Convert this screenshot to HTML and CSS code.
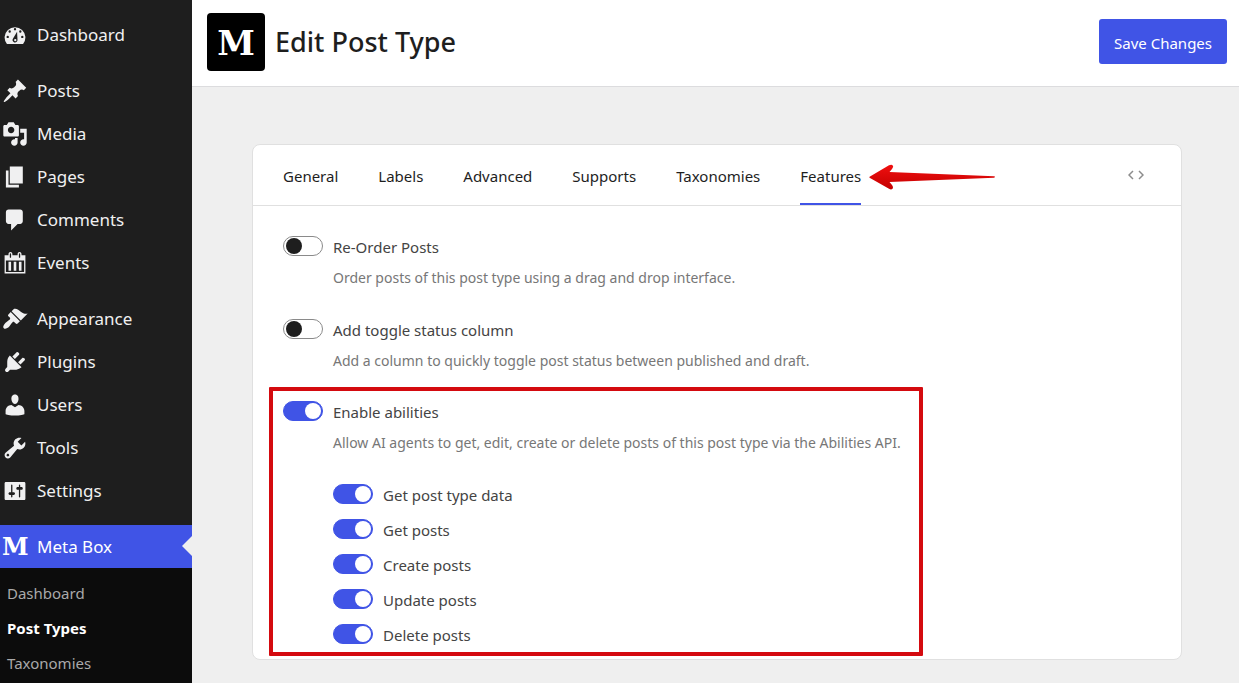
FILE: index.html
```html
<!DOCTYPE html>
<html lang="en">
<head>
    <meta charset="UTF-8">
    <meta name="viewport" content="width=device-width, initial-scale=1.0">
    <title>Edit Post Type</title>
    <link rel="stylesheet" href="styles.css">
</head>
<body>
    <!-- Admin menu -->
    <nav class="sidebar">
        <ul class="menu">
            <li><a href="#">
                <svg class="icon" viewBox="0 0 20 20"><path fill-rule="evenodd" d="M3.8 17h12.4A8 8 0 1 0 3.8 17zM10 4.600a.9.9 0 1 1 0 1.800.9.9 0 1 1 0-1.800zM5.900 6.400a.9.9 0 1 1 0 1.800.9.9 0 1 1 0-1.800zM14.100 6.400a.9.9 0 1 1 0 1.800.9.9 0 1 1 0-1.800zM4.400 10.600a.9.9 0 1 1 0 1.800.9.9 0 1 1 0-1.800zM15.600 10.600a.9.9 0 1 1 0 1.800.9.9 0 1 1 0-1.800zM11.600 7.500L11.900 13.600a1.900 1.900 0 1 1-3.400-.9zM10.200 13a.9.9 0 1 0 0 1.800.9.9 0 1 0 0-1.800z"/></svg>
                Dashboard</a></li>
            <li class="separated"><a href="#">
                <svg class="icon" viewBox="0 0 20 20"><path d="M10.440 3.020l1.820-1.820 6.360 6.350-1.830 1.820c-1.050-.68-2.480-.57-3.410.36l-.75.75c-.92.93-1.040 2.350-.35 3.410l-1.830 1.820-2.410-2.410-2.800 2.790c-.42.42-3.380 2.710-3.800 2.290s1.860-3.390 2.280-3.810l2.790-2.790L4.100 9.360l1.830-1.820c1.050.69 2.480.57 3.400-.36l.75-.75c.93-.92 1.050-2.350.36-3.410z"/></svg>
                Posts</a></li>
            <li><a href="#">
                <svg class="icon" viewBox="0 0 20 20"><path d="M13 11V4c0-.55-.45-1-1-1h-1.670L9 1H5L3.670 3H2c-.55 0-1 .45-1 1v7c0 .55.45 1 1 1h10c.55 0 1-.45 1-1zM7 4.500c1.380 0 2.500 1.120 2.500 2.500S8.380 9.500 7 9.500 4.500 8.380 4.500 7 5.620 4.500 7 4.500zM14 6h5v10.500c0 1.380-1.120 2.500-2.500 2.500S14 17.880 14 16.500s1.120-2.500 2.500-2.500c.17 0 .34.020.5.050V9h-3V6zm-4 8.050V13h2v3.500c0 1.380-1.120 2.500-2.500 2.500S7 17.880 7 16.500 8.120 14 9.500 14c.17 0 .34.020.5.050z"/></svg>
                Media</a></li>
            <li><a href="#">
                <svg class="icon" viewBox="0 0 20 20"><path d="M6 15V2h10v13H6zm-1 1h8v2H3V5h2v11z"/></svg>
                Pages</a></li>
            <li><a href="#">
                <svg class="icon" viewBox="0 0 20 20"><path d="M5 2h9c1.100 0 2 .9 2 2v7c0 1.100-.9 2-2 2h-2l-5 5v-5H5c-1.100 0-2-.9-2-2V4c0-1.100.9-2 2-2z"/></svg>
                Comments</a></li>
            <li><a href="#">
                <svg class="icon" viewBox="0 0 20 20"><path d="M15 4h3v14H2V4h3V3c0-.83.67-1.500 1.500-1.500S8 2.170 8 3v1h4V3c0-.83.67-1.500 1.500-1.500S15 2.170 15 3v1zM6 3v2.500c0 .28.22.5.5.5s.5-.22.5-.5V3c0-.28-.22-.5-.5-.5S6 2.720 6 3zm7 0v2.500c0 .28.22.5.5.5s.5-.22.5-.5V3c0-.28-.22-.5-.5-.5s-.5.22-.5.5zm4 14V8H3v9h14zM7 16V9H5v7h2zm4 0V9H9v7h2zm4 0V9h-2v7h2z"/></svg>
                Events</a></li>
            <li class="separated"><a href="#">
                <svg class="icon" viewBox="0 0 20 20"><path d="M14.480 11.060L7.410 3.990l1.500-1.500c.5-.56 2.300-.47 3.510.32 1.210.8 1.430 1.280 2.910 2.100 1.180.64 2.450 1.260 4.450.85zm-.71.71L6.700 4.700 4.930 6.470c-.39.39-.39 1.020 0 1.410l1.060 1.060c.39.39.39 1.030 0 1.420-.6.6-1.430 1.110-2.210 1.690-.35.26-.7.53-1.010.84C1.430 14.230.4 16.080 1.400 17.070c.99 1 2.840-.03 4.180-1.360.31-.31.58-.66.85-1.020.57-.78 1.080-1.610 1.690-2.210.39-.39 1.020-.39 1.410 0l1.060 1.060c.39.39 1.020.39 1.410 0z"/></svg>
                Appearance</a></li>
            <li><a href="#">
                <svg class="icon" viewBox="0 0 20 20"><path d="M13.110 4.360L9.870 7.600 8 5.730l3.240-3.240c.35-.34 1.050-.2 1.560.32.52.51.66 1.210.31 1.550zm-8 1.770l.91-1.120 9.010 9.010-1.190.84c-.71.71-2.630 1.160-3.820 1.160H6.140L4.900 17.260c-.59.59-1.540.59-2.120 0-.59-.58-.59-1.530 0-2.120l1.240-1.240v-3.880c0-1.130.4-3.190 1.090-3.890zm7.260 3.970l3.240-3.240c.34-.35 1.040-.21 1.550.31.52.51.66 1.210.31 1.550l-3.240 3.250z"/></svg>
                Plugins</a></li>
            <li><a href="#">
                <svg class="icon" viewBox="0 0 20 20"><path d="M10 9.250c-2.270 0-2.730-3.440-2.730-3.440C7 4.020 7.820 2 9.970 2c2.160 0 2.980 2.020 2.710 3.810 0 0-.41 3.440-2.680 3.440zm0 2.570L12.720 10c2.390 0 4.520 2.330 4.520 4.530v2.490s-3.650 1.130-7.240 1.130c-3.650 0-7.240-1.130-7.240-1.130v-2.490c0-2.250 1.940-4.480 4.470-4.480z"/></svg>
                Users</a></li>
            <li><a href="#">
                <svg class="icon" viewBox="0 0 20 20"><path d="M16.680 9.770c-1.340 1.340-3.300 1.670-4.950.99l-5.410 6.520c-.99.99-2.590.99-3.580 0s-.99-2.590 0-3.570l6.520-5.420c-.68-1.650-.35-3.610.99-4.950 1.280-1.280 3.120-1.620 4.720-1.060l-2.890 2.890 2.820 2.820 2.860-2.870c.53 1.580.18 3.390-1.080 4.650zM3.810 16.210c.4.39 1.040.39 1.430 0 .4-.4.4-1.040 0-1.430-.39-.4-1.030-.4-1.430 0-.39.39-.39 1.030 0 1.430z"/></svg>
                Tools</a></li>
            <li><a href="#">
                <svg class="icon" viewBox="0 0 20 20"><path d="M18 16V4c0-.55-.45-1-1-1H3c-.55 0-1 .45-1 1v12c0 .55.45 1 1 1h14c.55 0 1-.45 1-1zM8 11h1c.55 0 1 .45 1 1s-.45 1-1 1H8v1.500c0 .28-.22.5-.5.5s-.5-.22-.5-.5V13H6c-.55 0-1-.45-1-1s.45-1 1-1h1V5.500c0-.28.22-.5.5-.5s.5.22.5.5V11zm5-2h-1c-.55 0-1-.45-1-1s.45-1 1-1h1V5.500c0-.28.22-.5.5-.5s.5.22.5.5V7h1c.55 0 1 .45 1 1s-.45 1-1 1h-1v5.500c0 .28-.22.5-.5.5s-.5-.22-.5-.5V9z"/></svg>
                Settings</a></li>
            <li class="separated current"><a href="#">
                <span class="icon icon-m" aria-hidden="true">M</span>
                Meta Box</a></li>
        </ul>
        <ul class="submenu">
            <li><a href="#">Dashboard</a></li>
            <li class="active"><a href="#">Post Types</a></li>
            <li><a href="#">Taxonomies</a></li>
        </ul>
    </nav>

    <div class="content">
        <header class="header">
            <span class="logo" aria-hidden="true">M</span>
            <h1>Edit Post Type</h1>
            <button type="submit" class="btn">Save Changes</button>
        </header>

        <main class="card">
            <div class="tabs">
                <a href="#">General</a>
                <a href="#">Labels</a>
                <a href="#">Advanced</a>
                <a href="#">Supports</a>
                <a href="#">Taxonomies</a>
                <a href="#" class="active">Features
                    <svg class="arrow" viewBox="0 0 126 26">
                        <defs>
                            <linearGradient id="red" x1="0" y1="0" x2="0" y2="1">
                                <stop offset="0" stop-color="#f01010"/>
                                <stop offset="1" stop-color="#c40000"/>
                            </linearGradient>
                        </defs>
                        <path fill="url(#red)" d="M1 12.500L20 1.300Q23-.2 24 2Q24.500 3 23 5L20.500 8L125 12.300Q127 13 125 13.700L20.500 18L23 21Q24.800 23.500 23.300 25Q22 26 20 24.700L1 14Q-.2 13.200 1 12.500z"/>
                    </svg>
                </a>
                <button type="button" class="code-btn" aria-label="Get PHP code">
                    <svg viewBox="0 0 16 10"><path d="M5 1L1 5l4 4M11 1l4 4-4 4"/></svg>
                </button>
            </div>

            <div class="fields">
                <div class="field">
                    <input type="checkbox" class="toggle" id="reorder">
                    <div>
                        <label for="reorder">Re-Order Posts</label>
                        <p class="description">Order posts of this post type using a drag and drop interface.</p>
                    </div>
                </div>
                <div class="field">
                    <input type="checkbox" class="toggle" id="status">
                    <div>
                        <label for="status">Add toggle status column</label>
                        <p class="description">Add a column to quickly toggle post status between published and draft.</p>
                    </div>
                </div>
                <div class="field highlight">
                    <input type="checkbox" class="toggle" id="abilities" checked>
                    <div>
                        <label for="abilities">Enable abilities</label>
                        <p class="description">Allow AI agents to get, edit, create or delete posts of this post type via the Abilities API.</p>
                        <div class="abilities">
                            <div class="field">
                                <input type="checkbox" class="toggle" id="get-type" checked>
                                <label for="get-type">Get post type data</label>
                            </div>
                            <div class="field">
                                <input type="checkbox" class="toggle" id="get-posts" checked>
                                <label for="get-posts">Get posts</label>
                            </div>
                            <div class="field">
                                <input type="checkbox" class="toggle" id="create-posts" checked>
                                <label for="create-posts">Create posts</label>
                            </div>
                            <div class="field">
                                <input type="checkbox" class="toggle" id="update-posts" checked>
                                <label for="update-posts">Update posts</label>
                            </div>
                            <div class="field">
                                <input type="checkbox" class="toggle" id="delete-posts" checked>
                                <label for="delete-posts">Delete posts</label>
                            </div>
                        </div>
                    </div>
                </div>
            </div>
        </main>
    </div>
</body>
</html>
```
FILE: styles.css
```css
* {
    box-sizing: border-box;
}
body {
    display: flex;
    min-height: 100vh;
    margin: 0;
    font-family: "Segoe UI", "Noto Sans", sans-serif;
    font-size: 15px;
    line-height: 24px;
    background-color: #efefef;
    color: #1e1e1e;
}
a {
    color: inherit;
    text-decoration: none;
}

/* Sidebar */
.sidebar {
    display: flex;
    flex-direction: column;
    flex: 0 0 192px;
    background-color: #1e1e1e;
    color: #f0f0f1;
}
.menu, .submenu {
    margin: 0;
    padding: 0;
    list-style: none;
}
.menu {
    padding-top: 13px;
    font-size: 17px;
}
.menu a {
    display: flex;
    align-items: center;
    gap: 9px;
    height: 43px;
    padding-left: 2px;
}
.separated {
    margin-top: 13px;
}
.icon {
    flex: none;
    width: 26px;
    height: 26px;
    fill: #f0f0f1;
}
.icon-m {
    font: bold 24px/26px "DejaVu Serif", serif;
    color: #fff;
}
.current {
    position: relative;
    background-color: #4054e6;
    color: #fff;
}
.current::after {
    content: "";
    position: absolute;
    top: 11px;
    right: 0;
    border: 10px solid transparent;
    border-left: 0;
    border-right-color: #efefef;
}
.submenu {
    flex: 1;
    padding: 8px 7px 0;
    background-color: #0c0c0c;
    color: #a9a9aa;
}
.submenu a {
    display: block;
    line-height: 35px;
}
.submenu .active {
    color: #fff;
    font-weight: bold;
}

/* Header */
.content {
    flex: 1;
    min-width: 0;
}
.header {
    display: flex;
    align-items: center;
    gap: 10px;
    height: 87px;
    padding: 0 12px 3px 15px;
    background-color: #fff;
    border-bottom: 1px solid #dcdcde;
}
.logo {
    width: 58px;
    height: 58px;
    border-radius: 4px;
    background-color: #000;
    color: #fff;
    font: bold 34px/60px "DejaVu Serif", serif;
    text-align: center;
}
.header h1 {
    margin: 0;
    font-size: 27px;
    font-weight: 500;
    line-height: 40px;
}
.btn {
    margin-left: auto;
    height: 45px;
    padding: 2px 15px 0;
    border: none;
    border-radius: 3px;
    background-color: #4054e6;
    color: #fff;
    font: inherit;
    cursor: pointer;
}

/* Card */
.card {
    margin: 57px 57px 24px 60px;
    border: 1px solid #e0e0e0;
    border-radius: 8px;
    background-color: #fff;
}
.tabs {
    display: flex;
    gap: 40px;
    padding: 0 30px;
    border-bottom: 1px solid #e0e0e0;
}
.tabs a {
    position: relative;
    padding-top: 4px;
    border-bottom: 2px solid transparent;
    line-height: 54px;
}
.tabs .active {
    border-color: #4054e6;
}
.arrow {
    position: absolute;
    top: 19px;
    left: 100%;
    width: 126px;
    height: 26px;
    margin-left: 8px;
}
.code-btn {
    margin-left: auto;
    padding: 0 7px;
    border: none;
    background: none;
    cursor: pointer;
}
.code-btn svg {
    display: block;
    width: 16px;
    height: 10px;
    fill: none;
    stroke: #8c8c8c;
    stroke-width: 1.5;
}

/* Fields */
.fields {
    display: flex;
    flex-direction: column;
    align-items: flex-start;
    gap: 27px;
    padding: 29px 30px 12px;
}
.field {
    display: flex;
    gap: 10px;
}
.field label {
    color: #444;
}
.toggle {
    flex: none;
    appearance: none;
    width: 40px;
    height: 20px;
    margin: 1px 0 0;
    padding: 1px 1px 1px 2px;
    border: 1px solid #8a8a8a;
    border-radius: 10px;
    background-color: #fff;
    cursor: pointer;
}
.toggle::before {
    content: "";
    display: block;
    width: 16px;
    height: 16px;
    border-radius: 50%;
    background-color: #1e1e1e;
}
.toggle:checked {
    border-color: #4054e6;
    background-color: #4054e6;
}
.toggle:checked::before {
    margin-left: auto;
    background-color: #fff;
}
.description {
    margin: 6px 0 0;
    color: #777;
    font-size: 14px;
    line-height: 26px;
}
.abilities {
    display: flex;
    flex-direction: column;
    gap: 11px;
    margin-top: 27px;
}
.highlight {
    position: relative;
    margin-top: -1px;
}
.highlight::after {
    content: "";
    position: absolute;
    inset: -13px -22px -9px -14px;
    border: 4px solid #d40a0f;
    border-radius: 1px;
    pointer-events: none;
}
```
